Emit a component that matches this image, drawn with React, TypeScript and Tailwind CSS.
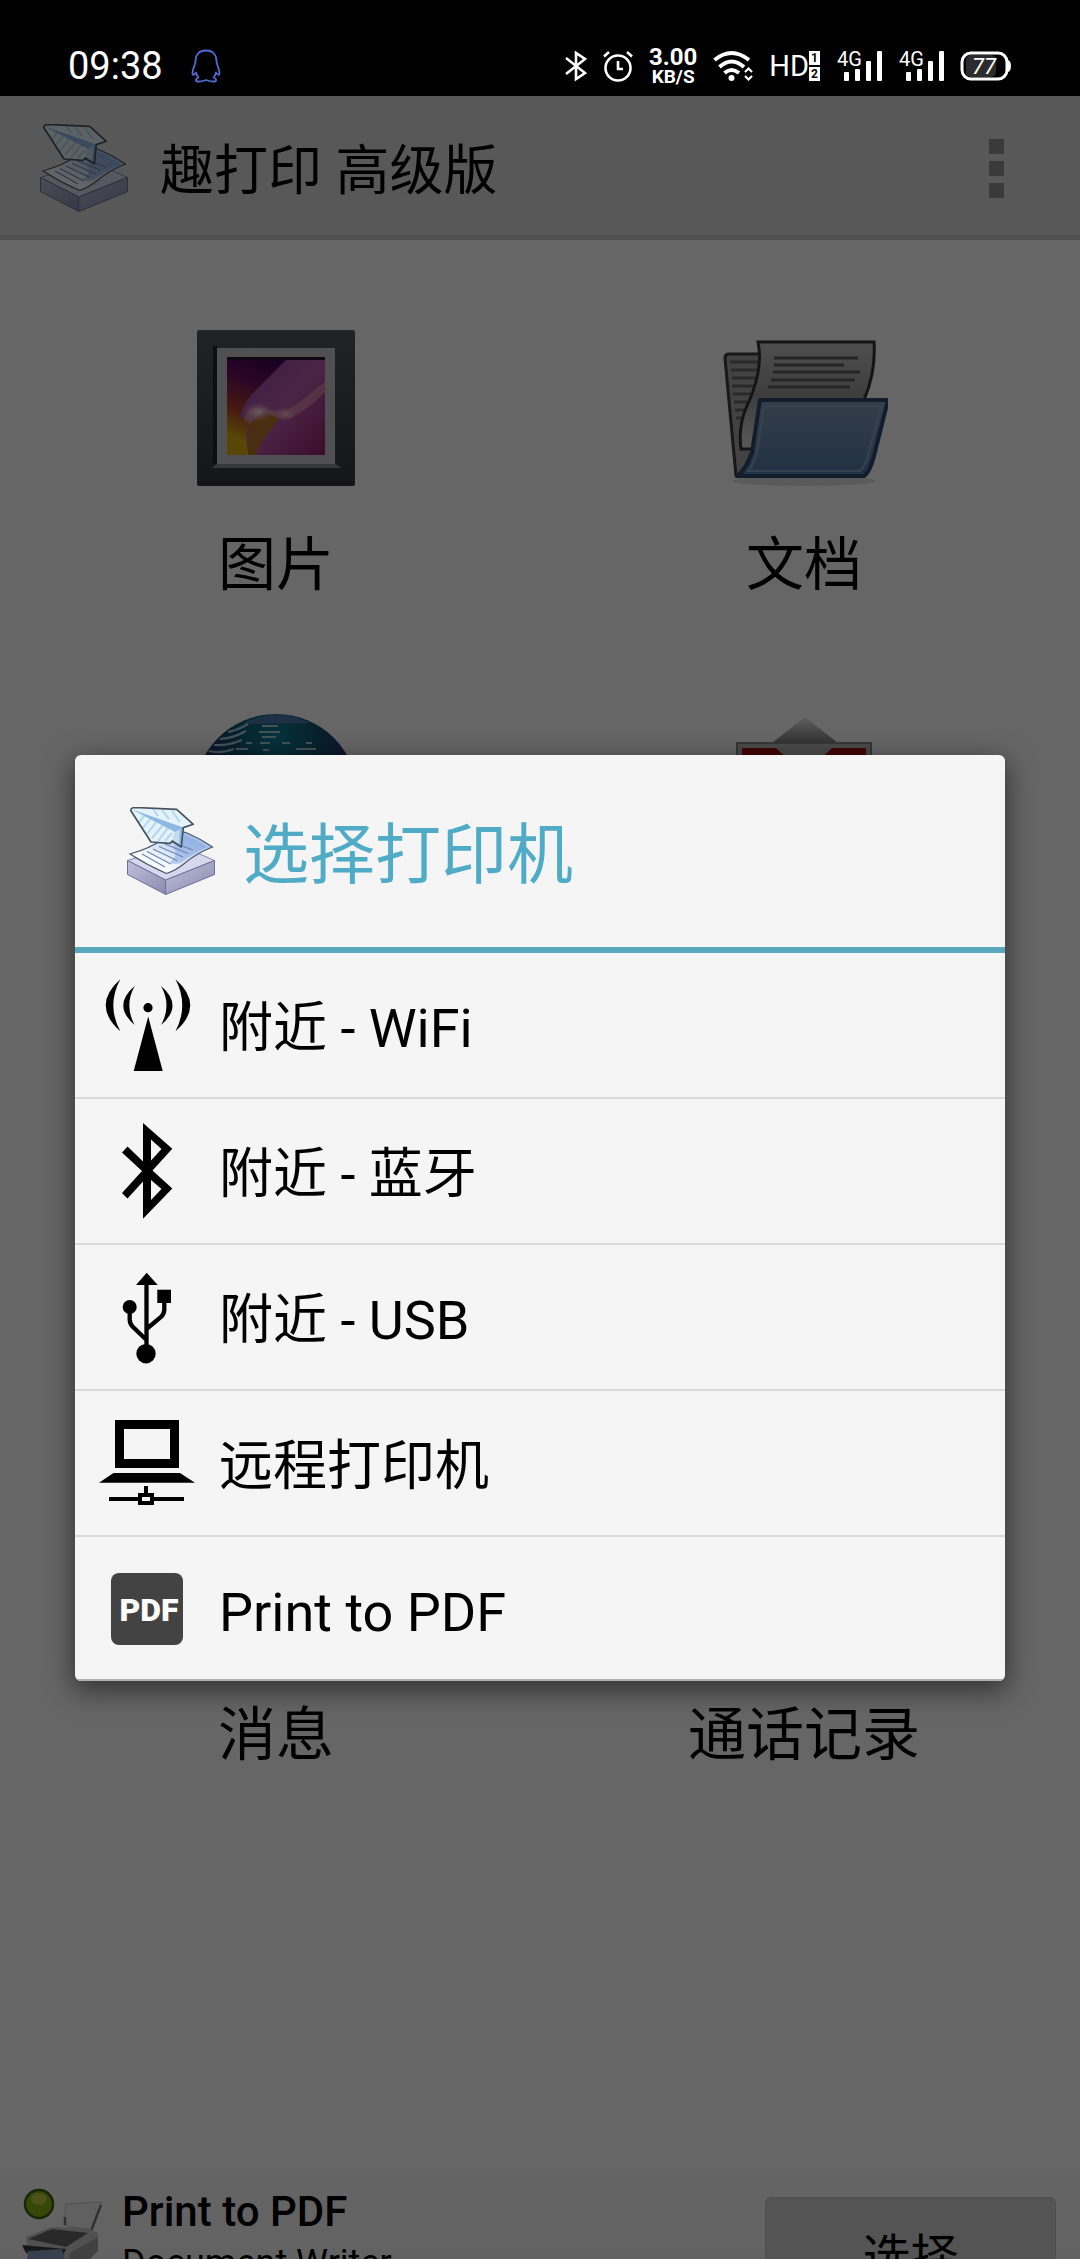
import type { ReactNode } from "react";

function AppLogo() {
  return (
    <svg viewBox="0 0 88 88" className="w-[88px] h-[88px] shrink-0" aria-hidden="true">
      <defs>
        <linearGradient id="logo-side" x1="0" y1="0" x2="1" y2="1">
          <stop offset="0" stopColor="#c0c0da" />
          <stop offset="1" stopColor="#8a8ab2" />
        </linearGradient>
        <linearGradient id="logo-sheet" x1="0" y1="1" x2="1" y2="0">
          <stop offset="0.300" stopColor="#f7faff" />
          <stop offset="0.800" stopColor="#a9c4ee" />
        </linearGradient>
      </defs>
      <path d="M.5 53.500 L30 44 H66 L87.500 53.500 L38.700 73Z" fill="#d6d9ee" stroke="#8587ad" />
      <path d="M.5 53.500 L38.700 73 V87.500 L.5 67.500Z" fill="url(#logo-side)" stroke="#6f7094" />
      <path d="M38.700 73 L87.500 53.500 V67.500 L38.700 87.500Z" fill="url(#logo-side)" stroke="#6f7094" />
      <path
        d="M3 47 Q24 41 36 32 Q50 22 60 26 Q74 32 85.500 40 Q70 46 58 56 Q48 64 39.500 66.500 Q20 58 3 47Z"
        fill="url(#logo-sheet)"
        stroke="#4d5868"
        strokeWidth="1.200"
      />
      <path d="M46 40 L58 28 Q72 34 80 40 Q66 46 54 56 Q42 58 44 54 Q52 48 46 40Z" fill="#7f9fdc" opacity=".5" />
      <path
        d="M15 47 L38 60 M20 44.500 L44 57 M26 42 L50 53.500 M32 39.500 L56 50 M38 37 L61 46.500 M44 35 L66 43"
        stroke="#6f84b4"
        strokeWidth="1.200"
      />
      <path
        d="M3.700 3.500 Q4 .5 8 .5 L49.700 2.300 L66.300 17.300 L56.300 20.600 L54.300 40 L45.300 34 L43 36.300 L24 35Z"
        fill="#e3f2fb"
      />
      <path
        d="M18 8 L12 15 M24 11 L16 21 M30 14 L20 27 M36 18 L25 31 M41 21 L31 34 M45 26 L38 34 M26 2 L31 9 M35 3 L42 12 M45 4 L53 15"
        stroke="#b4d6ea"
        strokeWidth="2"
      />
      <path d="M5 2.500 L56.300 20.600 L54.300 40 L45.300 34 L48 25Z" fill="#8cb8e4" />
      <path d="M48 25 L53 22 L52 37 L45.300 34Z" fill="#c2dcf2" />
      <path
        d="M3.700 3.500 Q4 .5 8 .5 L49.700 2.300 L66.300 17.300 L56.300 20.600 L54.300 40 L45.300 34 L43 36.300 L24 35Z"
        fill="none"
        stroke="#46545f"
        strokeWidth="1.700"
        strokeLinejoin="round"
      />
    </svg>
  );
}

function QQIcon() {
  return (
    <svg viewBox="0 0 30 34" className="w-[30px] h-[34px]" fill="none" stroke="#4f6bd0" strokeWidth="1.800" strokeLinejoin="round" aria-hidden="true">
      <path d="M15 1.500 C8 1.500 4.500 6 4.500 12 C4.500 16 1.500 19 1.500 24 C1.500 27 3 26 5 23.500 C5.500 26 6.500 27.500 7.500 28.500 C4 30 4 32.500 8 32.500 C12 32.500 13 31.500 15 31 C17 31.500 18 32.500 22 32.500 C26 32.500 26 30 22.500 28.500 C23.500 27.500 24.500 26 25 23.500 C27 26 28.500 27 28.500 24 C28.500 19 25.500 16 25.500 12 C25.500 6 22 1.500 15 1.500Z" />
    </svg>
  );
}

function SignalIcon() {
  return (
    <svg viewBox="-2 -4 46 40" className="w-[46px] h-10" fill="#fff" aria-hidden="true">
      <text x="-1" y="16" fontSize="20" fontFamily="Roboto, sans-serif">4G</text>
      <rect x="6" y="22" width="5" height="9" rx="1" />
      <rect x="17" y="19" width="5" height="12" rx="1" />
      <rect x="28" y="11" width="5" height="20" rx="1" />
      <rect x="39" y="1" width="5" height="30" rx="1" />
    </svg>
  );
}

function StatusBar() {
  return (
    <div className="h-24 shrink-0 bg-black text-white flex items-end justify-between px-[68px] pb-[10px]">
      <div className="flex items-center gap-[28px] h-10">
        <span className="text-[38px] leading-10">09:38</span>
        <QQIcon />
      </div>
      <div className="flex items-center gap-4 h-10">
        <svg viewBox="0 0 22 32" className="w-[22px] h-8" fill="none" stroke="#fff" strokeWidth="2.600" aria-hidden="true">
          <path d="M1 8 L20 23 L11 29 V3 L20 9 L1 24" />
        </svg>
        <svg viewBox="0 0 30 32" className="w-[30px] h-8" fill="none" stroke="#fff" strokeWidth="2.600" aria-hidden="true">
          <circle cx="15" cy="18" r="12.500" />
          <path d="M15 11 V19 H20 M1 6.500 L6 2 M29 6.500 L24 2" />
        </svg>
        <div className="flex flex-col items-center font-bold">
          <span className="text-[24px] leading-[22px]">3.00</span>
          <span className="text-[19px] leading-[18px]">KB/S</span>
        </div>
        <svg viewBox="0 0 40 32" className="w-10 h-8" fill="none" stroke="#fff" strokeWidth="4" aria-hidden="true">
          <path d="M1.500 10 Q18.500 -4 36 10 M6.500 17 Q18.500 6 31 17" />
          <path d="M11.500 23 Q18.500 17 26 23" />
          <circle cx="18.500" cy="28" r="3" fill="#fff" stroke="none" />
          <path d="M32 22 L35.500 18.500 L39 22 M32 26 L35.500 29.500 L39 26" strokeWidth="2.200" />
        </svg>
        <div className="flex items-center">
          <span className="text-[29px] leading-8">HD</span>
          <span className="flex flex-col gap-[2px] text-[12px] leading-[14px] font-bold text-black text-center">
            <span className="bg-white w-[11px]">1</span>
            <span className="bg-white w-[11px]">2</span>
          </span>
        </div>
        <SignalIcon />
        <SignalIcon />
        <svg viewBox="0 0 52 32" className="w-[52px] h-8" aria-hidden="true">
          <rect x="6" y="5" width="30" height="22" rx="5" fill="#2c2c2c" />
          <rect x="2" y="3" width="45" height="26" rx="9" fill="none" stroke="#fff" strokeWidth="3" />
          <path d="M48 10 Q51 11 51 16 Q51 21 48 22Z" fill="#fff" />
          <text x="24" y="24" fontSize="22" fontStyle="italic" textAnchor="middle" fill="#fff" fontFamily="Roboto, sans-serif">77</text>
        </svg>
      </div>
    </div>
  );
}

function PictureIcon() {
  return (
    <svg viewBox="0 0 168 168" className="w-[168px] h-[168px]" aria-hidden="true">
      <defs>
        <linearGradient id="pic-frame" x1="0" y1="0" x2="0" y2="1">
          <stop offset="0" stopColor="#54575c" />
          <stop offset="1" stopColor="#36383c" />
        </linearGradient>
        <linearGradient id="pic-dark" x1="0.500" y1="0" x2="0.100" y2="1">
          <stop offset="0" stopColor="#3a0058" />
          <stop offset="0.300" stopColor="#6c0f5c" />
          <stop offset="0.600" stopColor="#b0402c" />
          <stop offset="0.850" stopColor="#d9b010" />
        </linearGradient>
        <linearGradient id="pic-pink" x1="0" y1="0" x2="1" y2="1">
          <stop offset="0" stopColor="#8c4aa8" />
          <stop offset="0.500" stopColor="#bd5cae" />
          <stop offset="1" stopColor="#93206c" />
        </linearGradient>
        <radialGradient id="pic-glow">
          <stop offset="0" stopColor="#ffe9e0" />
          <stop offset="1" stopColor="#e08ab0" stopOpacity="0" />
        </radialGradient>
      </defs>
      <rect x="5" y="6" width="158" height="156" rx="2" fill="url(#pic-frame)" />
      <path d="M20 144 L26 139 H142 L149 144Z" fill="#8a8c8e" />
      <rect x="21" y="22" width="4" height="118" fill="#222428" />
      <rect x="25" y="24" width="118" height="116" fill="#c8c8cc" />
      <rect x="35" y="33" width="98" height="98" fill="url(#pic-dark)" />
      <path d="M95 35 H133 V131 H58 Q50 110 60 98 L48 92 Q52 78 62 68Z" fill="url(#pic-pink)" />
      <path d="M60 98 Q72 84 88 94 Q80 104 74 112 Q66 122 64 131 H56 Q54 112 60 98Z" fill="#b8742c" />
      <path d="M52 96 Q56 80 72 84 Q90 92 105 80 Q120 68 133 58 V68 Q116 86 98 94 Q84 96 74 88 Q64 92 58 100Z" fill="#e8a0b4" opacity=".6" />
      <ellipse cx="66" cy="88" rx="16" ry="10" fill="url(#pic-glow)" />
      <ellipse cx="94" cy="90" rx="12" ry="8" fill="url(#pic-glow)" opacity=".6" />
      <rect x="35" y="33" width="98" height="3" fill="#241030" />
    </svg>
  );
}

function DocumentIcon() {
  return (
    <svg viewBox="0 0 168 168" className="w-[168px] h-[168px]" aria-hidden="true">
      <defs>
        <linearGradient id="doc-sheet" x1="0" y1="0" x2="0" y2="1">
          <stop offset="0" stopColor="#c4c4c4" />
          <stop offset="0.500" stopColor="#9a9a9a" />
          <stop offset="1" stopColor="#dedede" />
        </linearGradient>
        <linearGradient id="doc-front" x1="0" y1="0" x2="0" y2="1">
          <stop offset="0" stopColor="#7f9cb8" />
          <stop offset="1" stopColor="#547ba8" />
        </linearGradient>
      </defs>
      <ellipse cx="84" cy="157" rx="72" ry="5" fill="#e2e2e2" />
      <path d="M5 34 Q5 30 9 30 H50 V120 L20 152 H16Z" fill="#a6a6a6" stroke="#3c3c3c" strokeWidth="3" strokeLinejoin="round" />
      <path d="M10 38 H38 M11 46 H38 M12 54 H38 M12 62 H37 M13 70 H34 M14 78 H31 M15 86 H28 M16 94 H25" stroke="#6a6a6a" strokeWidth="3" />
      <path d="M38 18 H154 Q156 48 144 76 L140 125 H21 Q18 104 26 84 Q44 46 38 18Z" fill="url(#doc-sheet)" stroke="#333" strokeWidth="3" />
      <path d="M54 34 H138 M54 41 H124 M53 48 H140 M51 56 H135 M48 63 H130" stroke="#5c5c5c" strokeWidth="3" />
      <path d="M40 76 H168 L154 132 Q150 148 144 152 H17 Q26 146 32 128Z" fill="url(#doc-front)" stroke="#2b4a6c" strokeWidth="4" strokeLinejoin="round" />
      <path d="M44 82 H161 L148 132 Q145 142 140 147 H28 Q35 140 38 122Z" fill="none" stroke="#8aa6c2" strokeWidth="2" />
    </svg>
  );
}

function GlobeIcon() {
  return (
    <svg viewBox="0 0 168 168" className="w-[168px] h-[168px]" aria-hidden="true">
      <defs>
        <radialGradient id="globe" cx="0.500" cy="0.150" r="0.550">
          <stop offset="0" stopColor="#108098" />
          <stop offset="0.500" stopColor="#14506c" />
          <stop offset="1" stopColor="#3c2070" />
        </radialGradient>
      </defs>
      <circle cx="84" cy="82" r="82" fill="url(#globe)" />
      <path d="M50 10 Q84 -8 118 9Z" fill="#4a78b0" />
      <path d="M36 18 Q46 16 56 10 M28 25 Q42 24 54 17 M22 31 Q36 32 50 26 M17 37 Q28 40 42 35 M70 12 H86 M67 18 H88 M70 23 H84 M68 29 H78 M90 29 H98 M114 29 H120 M54 29 H60 M44 35 H56 M71 36 H77 M104 35 H124" stroke="#a9d0dc" strokeWidth="2.200" fill="none" />
    </svg>
  );
}

function MailIcon() {
  return (
    <svg viewBox="0 0 168 168" className="w-[168px] h-[168px]" aria-hidden="true">
      <defs>
        <linearGradient id="mail-flap" x1="0" y1="0" x2="0" y2="1">
          <stop offset="0" stopColor="#ececec" />
          <stop offset="1" stopColor="#808080" />
        </linearGradient>
      </defs>
      <path d="M52 29 L85 3 L118 29Z" fill="url(#mail-flap)" />
      <rect x="17" y="29" width="134" height="110" fill="#bcbcbc" stroke="#8a8a8a" strokeWidth="2" />
      <path d="M22 34 H56 L84 61 L112 34 H146 V133 H126 V65 L84 101 L42 65 V133 H22Z" fill="#a80f0f" />
    </svg>
  );
}

function PrinterIcon() {
  return (
    <svg viewBox="0 0 84 84" className="w-[84px] h-[84px]" aria-hidden="true">
      <path d="M44 17 L80 15 L69 44 L42 38Z" fill="#f0f0f0" stroke="#c8c8c8" />
      <path d="M79 18 L69 44 M43 30 V38" stroke="#7c7c7c" strokeWidth="2.500" />
      <path d="M4 50 L30 40 L66 41 L76 46 L76 58 L56 74 L6 64Z" fill="#c8c8c8" />
      <path d="M6 52 L30 42 L66 46 L44 60Z" fill="#666" />
      <path d="M0 58 L44 62 L40 70 L4 66Z" fill="#3a3a3a" />
      <path d="M6 64 L40 62 L46 84 H4Z" fill="#8aa4c0" />
      <path d="M48 66 L76 50 V64 L56 84 H46Z" fill="#a4a4a4" />
      <circle cx="17" cy="17" r="14" fill="#88b414" stroke="#405c18" strokeWidth="2.500" />
      <ellipse cx="17" cy="12" rx="8" ry="6" fill="#c0cc48" />
    </svg>
  );
}

interface Source {
  id: string;
  label?: string;
  icon?: ReactNode;
}

const sources: Source[] = [
  { id: "pictures", label: "图片", icon: <PictureIcon /> },
  { id: "documents", label: "文档", icon: <DocumentIcon /> },
  { id: "web", icon: <GlobeIcon /> },
  { id: "mail", icon: <MailIcon /> },
  { id: "slot-5" },
  { id: "slot-6" },
  { id: "messages", label: "消息" },
  { id: "calls", label: "通话记录" },
];

const printers: { label: string; icon: ReactNode }[] = [
  {
    label: "附近 - WiFi",
    icon: (
      <>
        <circle cx="49" cy="30.700" r="4.600" />
        <path d="M49.200 39.500 L63.700 94 H34.700Z" />
        <path d="M21.300 2.300 Q-7.900 28.300 21.300 54.300 Q7.300 28.300 21.300 2.300Z" />
        <path d="M35.700 9 Q12.900 28.500 35.700 48 Q24.900 28.500 35.700 9Z" />
        <path d="M76.500 2.300 Q106 28.300 76.500 54.300 Q90 28.300 76.500 2.300Z" />
        <path d="M62 9 Q85 28.500 62 48 Q73 28.500 62 9Z" />
      </>
    ),
  },
  {
    label: "附近 - 蓝牙",
    icon: (
      <path
        fillRule="evenodd"
        d="M44 0 L73.300 25.700 L53.500 47.500 L73.300 65.500 L44 95.700 V58.500 L28.500 75.500 L23 70 L43 48 L23 29.500 L28.500 23.500 L44 38.500Z M52 16.500 V37.500 L62.500 26Z M52 57 V77 L62.500 66Z"
      />
    ),
  },
  {
    label: "附近 - USB",
    icon: (
      <>
        <path d="M47.700 3.700 L58.700 16 H37Z" />
        <circle cx="47" cy="84.700" r="9.700" />
        <circle cx="30.700" cy="38" r="7" />
        <rect x="58.300" y="20.700" width="13.700" height="13.300" />
        <path d="M47.500 14 V80 M30.700 42 V51 Q31 55 34 58 L47.500 71 M65.300 32 V41 Q65 45 62 48 L47.500 60" fill="none" stroke="#000" strokeWidth="4.300" />
      </>
    ),
  },
  {
    label: "远程打印机",
    icon: (
      <path
        fillRule="evenodd"
        d="M16 5 H80 V53 H16Z M25 14 V44 H71 V14Z M14.500 58 H81 L96 67.700 H0Z M45 71 H49 V78 H55 V82 H85 V86 H55 V90 H39 V86 H10 V82 H39 V78 H45Z M43 82 V86 H51 V82Z"
      />
    ),
  },
  {
    label: "Print to PDF",
    icon: (
      <>
        <rect x="12" y="12" width="72" height="72" rx="8" fill="#434343" />
        <text x="50" y="60" fontSize="32" fontWeight="900" textAnchor="middle" fill="#fff" fontFamily="Roboto, sans-serif">PDF</text>
      </>
    ),
  },
];

function PrinterDialog() {
  return (
    <div role="dialog" aria-labelledby="dialog-title" className="w-full bg-[#f5f5f5] rounded-[6px] overflow-hidden shadow-[0_8px_28px_2px_rgba(0,0,0,0.5)]">
      <div className="h-[198px] flex items-center gap-7 px-[52px] border-b-[6px] border-[#57a7bd]">
        <AppLogo />
        <h2 id="dialog-title" className="pt-2.5 text-[66px] leading-[80px] text-[#4fabc6]">选择打印机</h2>
      </div>
      <ul className="divide-y-2 divide-[#dadada] shadow-[inset_0_-2px_0_#b0b0b0]">
        {printers.map((printer) => (
          <li key={printer.label}>
            <button type="button" className="w-full h-36 flex items-center gap-6 px-6 text-left">
              <svg viewBox="0 0 96 96" className="w-24 h-24 shrink-0" aria-hidden="true">
                {printer.icon}
              </svg>
              <span className="pt-2 text-[54px] leading-[72px]">{printer.label}</span>
            </button>
          </li>
        ))}
      </ul>
    </div>
  );
}

export default function App() {
  return (
    <div className="relative min-h-screen flex flex-col overflow-hidden bg-white text-black font-['Roboto','Noto_Sans_CJK_SC',sans-serif]">
      <StatusBar />

      <header className="h-36 shrink-0 flex items-center gap-8 pl-10 pr-[76px] bg-[#dcdcdc] shadow-[inset_0_-5px_0_#c6c6c6]">
        <AppLogo />
        <h1 className="flex-1 pt-2 text-[54px] leading-[72px]">趣打印 高级版</h1>
        <button type="button" aria-label="更多选项" className="flex flex-col gap-[7px]">
          <span className="size-[15px] bg-[#929292]" />
          <span className="size-[15px] bg-[#929292]" />
          <span className="size-[15px] bg-[#929292]" />
        </button>
      </header>

      <main className="flex-1 px-3 pt-[84px]">
        <div className="grid grid-cols-2 gap-y-[110px]">
          {sources.map((source) => (
            <button key={source.id} type="button" className="flex flex-col items-center gap-[34px]">
              <span className="h-[168px]">{source.icon}</span>
              <span className="h-[78px] text-[58px] leading-[78px]">{source.label}</span>
            </button>
          ))}
        </div>
      </main>

      <footer className="h-[90px] shrink-0 overflow-hidden flex items-start pl-[22px] pr-6 pt-[18px] bg-linear-to-b from-[#fbfbfb] to-[#f6f6f6]">
        <PrinterIcon />
        <div className="flex-1 flex flex-col pl-4">
          <span className="text-[42px] leading-[50px] font-medium">Print to PDF</span>
          <span className="text-[36px] leading-[52px]">Document Writer</span>
        </div>
        <button type="button" className="w-[291px] h-[122px] mt-[10px] rounded-[6px] bg-[#d2d2d2] border border-[#c4c4c4] text-[48px]">
          选择
        </button>
      </footer>

      {/* scrim leaves the status bar undimmed */}
      <div className="absolute inset-x-0 bottom-0 top-24 bg-black/60 flex items-center justify-center px-[75px] pt-20">
        <PrinterDialog />
      </div>
    </div>
  );
}
